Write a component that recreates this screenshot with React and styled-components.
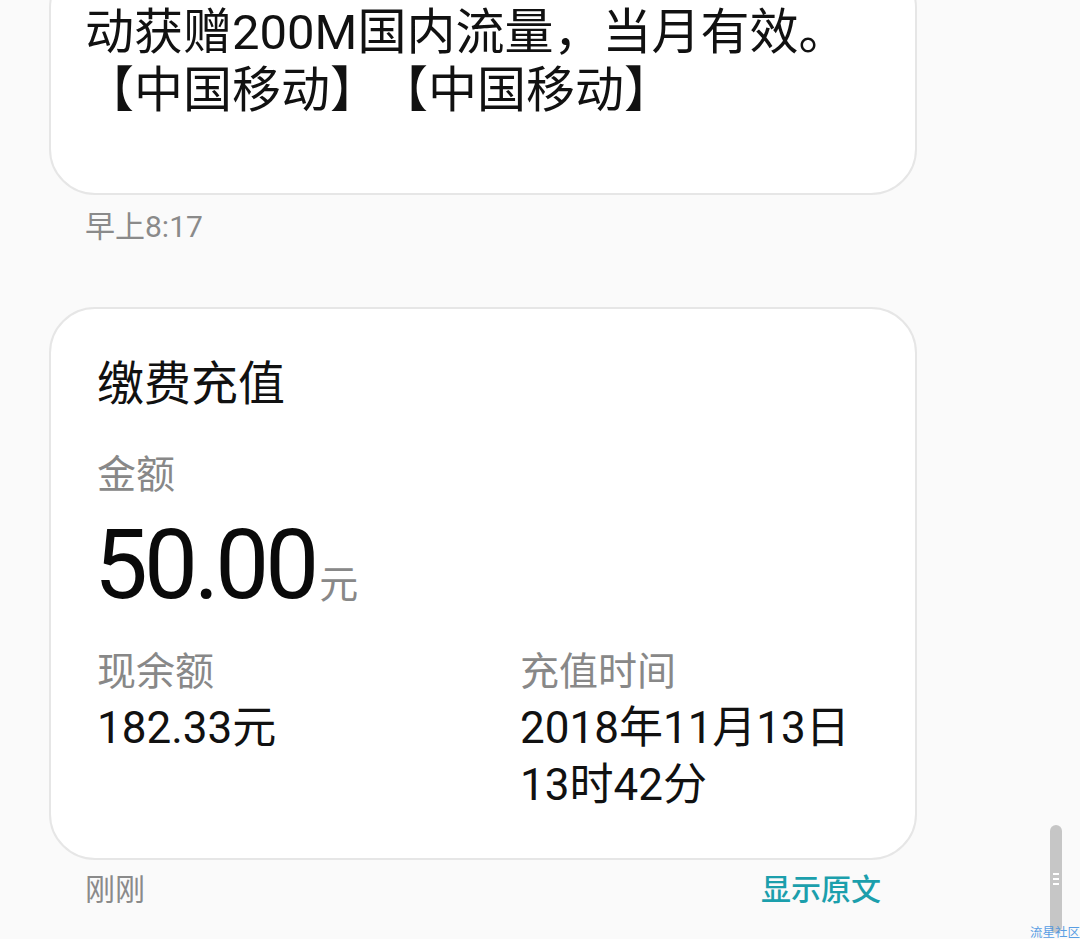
import React from "react";
import styled, { createGlobalStyle } from "styled-components";

const Global = createGlobalStyle`
  html, body { margin: 0; padding: 0; background: #fafafa; }
  body {
    font-family: Roboto, "Noto Sans CJK SC", sans-serif;
    overflow: hidden;
    text-spacing-trim: space-all;
  }
`;

const Page = styled.div`
  width: 1080px;
  height: 939px;
  overflow: hidden;
  position: relative;
  background: #fafafa;
`;

const Thread = styled.div`
  display: flex;
  flex-direction: column;
  padding-left: 49px;
  width: 868px;
`;

const Bubble = styled.div`
  box-sizing: border-box;
  width: 868px;
  background: #ffffff;
  border: 2px solid #e6e6e6;
  border-radius: 46px;
  padding: ${(p) => p.$pad};
  margin-top: ${(p) => p.$mt || "0"};
  color: #111;
`;

const MsgText = styled.div`
  font-size: 49px;
  line-height: 58px;
  color: #111;
  text-spacing-trim: space-all;
`;

const Meta = styled.div`
  display: flex;
  justify-content: space-between;
  align-items: center;
  padding: 0 36px;
  margin-top: ${(p) => p.$mt};
  font-size: 30px;
  line-height: 36px;
  color: #8a8a8a;
`;

const Action = styled.span`
  color: #1b9fac;
  font-weight: 500;
`;

const Title = styled.div`
  font-size: 47px;
  line-height: 60px;
  color: #111;
`;

const Label = styled.div`
  font-size: 39px;
  line-height: 50px;
  color: #888;
  margin-top: ${(p) => p.$mt || "0"};
`;

const Amount = styled.div`
  font-size: 96px;
  line-height: 110px;
  color: #0a0a0a;
  margin-top: 10px;
  margin-left: -3px;
  letter-spacing: -4px;
`;

const Unit = styled.span`
  font-size: 39px;
  color: #888;
  letter-spacing: 0;
  margin-left: 4px;
`;

const Grid = styled.div`
  display: grid;
  grid-template-columns: 423px 1fr;
  margin-top: 7px;
`;

const Value = styled.div`
  font-size: 44px;
  line-height: 57px;
  color: #111;
  margin-top: 3px;
`;

const ScrollThumb = styled.div`
  position: absolute;
  left: 1050px;
  top: 825px;
  width: 12px;
  height: 108px;
  border-radius: 6px;
  background: #c6c6c6;
  display: flex;
  flex-direction: column;
  align-items: center;
  justify-content: center;
  gap: 3px;
`;

const Grip = styled.span`
  width: 6px;
  height: 2px;
  background: #fff;
`;

const Watermark = styled.div`
  position: absolute;
  right: 0;
  bottom: 0;
  font-size: 12.5px;
  line-height: 14px;
  color: #3d8fe0;
  opacity: 0.85;
  font-family: "Noto Sans CJK SC", sans-serif;
`;

export default function App() {
  return (
    <Page>
      <Global />
      <Thread>
        <Bubble $pad="40px 36px 73px 34px" $mt="-38px">
          <MsgText>
            动获赠200M国内流量，当月有效。
            <br />
            【中国移动】【中国移动】
          </MsgText>
        </Bubble>
        <Meta $mt="14px">
          <span>早上8:17</span>
        </Meta>
        <Bubble $pad="45px 46px 44px 46px" $mt="62px">
          <Title>缴费充值</Title>
          <Label $mt="36px">金额</Label>
          <Amount>
            50.00<Unit>元</Unit>
          </Amount>
          <Grid>
            <div>
              <Label>现余额</Label>
              <Value>182.33元</Value>
            </div>
            <div>
              <Label>充值时间</Label>
              <Value>
                2018年11月13日
                <br />
                13时42分
              </Value>
            </div>
          </Grid>
        </Bubble>
        <Meta $mt="12px">
          <span>刚刚</span>
          <Action>显示原文</Action>
        </Meta>
      </Thread>
      <ScrollThumb>
        <Grip />
        <Grip />
        <Grip />
      </ScrollThumb>
      <Watermark>流星社区</Watermark>
    </Page>
  );
}
